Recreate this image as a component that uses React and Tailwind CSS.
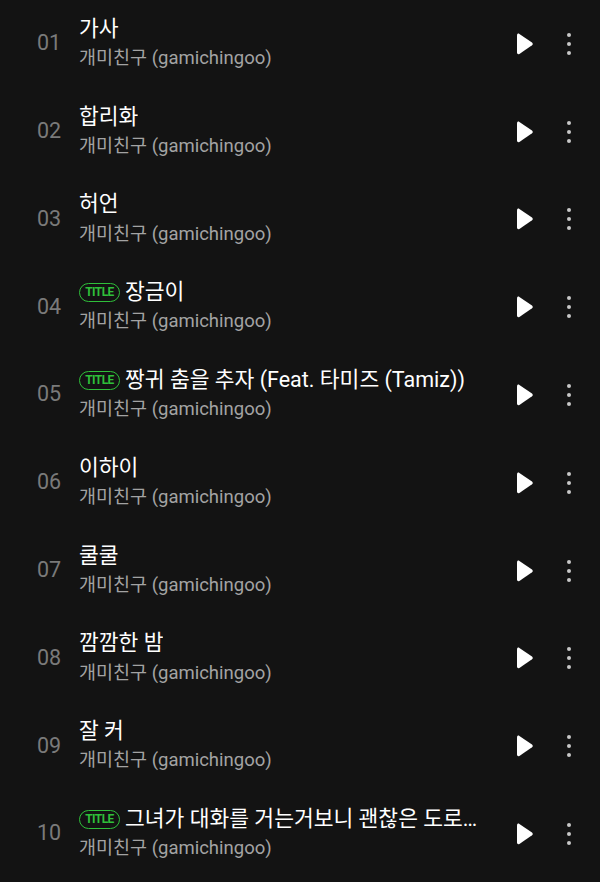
import React from 'react'

const tracks = [
  { no: '01', title: '가사' },
  { no: '02', title: '합리화' },
  { no: '03', title: '허언' },
  { no: '04', title: '장금이', isTitle: true },
  { no: '05', title: '짱귀 춤을 추자 (Feat. 타미즈 (Tamiz))', isTitle: true },
  { no: '06', title: '이하이' },
  { no: '07', title: '쿨쿨' },
  { no: '08', title: '깜깜한 밤' },
  { no: '09', title: '잘 커' },
  { no: '10', title: '그녀가 대화를 거는거보니 괜찮은 도로시인가봐', isTitle: true },
]

function PlayIcon() {
  return (
    <svg width="20" height="22" viewBox="0 0 20 22">
      <path
        d="M3 2.2 C3 0.9 4.3 0.2 5.4 0.9 L18 9.4 C19 10.1 19 11.5 18 12.2 L5.4 20.9 C4.3 21.6 3 20.9 3 19.6 Z"
        fill="#ffffff"
      />
    </svg>
  )
}

function MoreIcon() {
  return (
    <div className="flex flex-col items-center gap-[5px]">
      <span className="w-[4px] h-[4px] rounded-full bg-[#c8c8c8]" />
      <span className="w-[4px] h-[4px] rounded-full bg-[#c8c8c8]" />
      <span className="w-[4px] h-[4px] rounded-full bg-[#c8c8c8]" />
    </div>
  )
}

function TitleBadge() {
  return (
    <span className="inline-flex items-center justify-center h-[19px] w-[41px] mr-[5px] rounded-full border-[1.5px] border-[#2fbf3a] text-[#2fbf3a] text-[12px] font-bold leading-none tracking-[-0.6px] shrink-0">
      TITLE
    </span>
  )
}

export default function App() {
  return (
    <div
      className="w-[600px] h-[882px] bg-[#131313] overflow-hidden flex flex-col"
      style={{ fontFamily: 'Roboto, "Noto Sans CJK KR", sans-serif' }}
    >
      <div className="flex flex-col">
        {tracks.map((t) => (
          <div key={t.no} className="flex items-center h-[87.8px]">
            <div className="w-[79px] pl-[37px] text-[21.5px] text-[#7a7a7a] leading-none -mt-[2px]">
              {t.no}
            </div>
            <div className="flex-1 min-w-0 flex flex-col mr-[24px]">
              <div className="flex items-center h-[30px] text-[21.5px] text-white">
                {t.isTitle && <TitleBadge />}
                <span className="truncate">{t.title}</span>
              </div>
              <div className="h-[30px] flex items-center text-[18.5px] text-[#a3a3a3]">
                개미친구 (gamichingoo)
              </div>
            </div>
            <div className="w-[86px] flex items-center">
              <PlayIcon />
              <div className="ml-[33px]">
                <MoreIcon />
              </div>
            </div>
          </div>
        ))}
      </div>
      <div className="mt-auto mb-[5px] h-[4px] bg-[#232323] flex">
        <div className="w-[6px] h-full bg-[#2fd23a]" />
      </div>
    </div>
  )
}
